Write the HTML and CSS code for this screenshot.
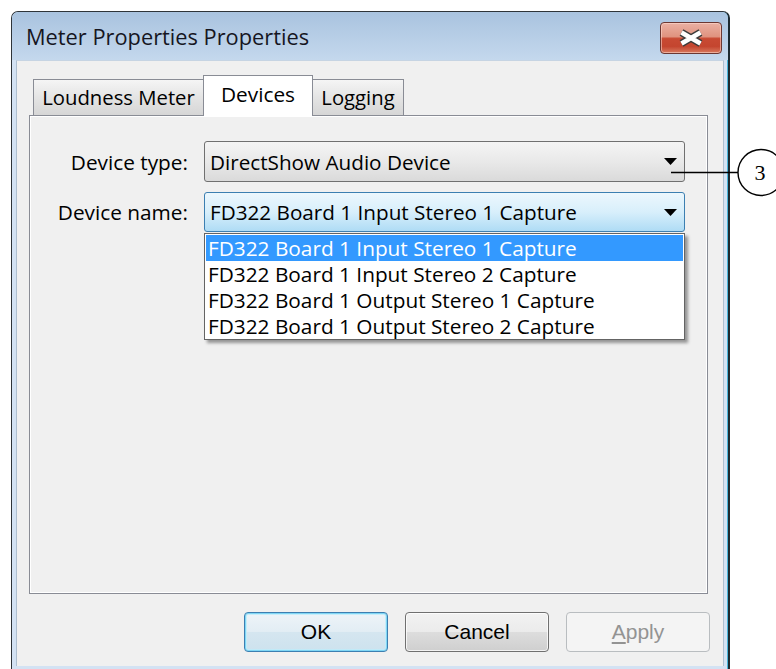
FILE: index.html
```html
<!DOCTYPE html>
<html lang="en">
<head>
<meta charset="utf-8">
<title>Meter Properties Properties</title>
<link rel="stylesheet" href="styles.css">
</head>
<body>
<div class="window">
  <div class="titlebar">
    <span class="title">Meter Properties Properties</span>
    <div class="close" aria-label="Close">
      <svg width="62" height="32" viewBox="0 0 62 32">
        <path d="M21.5 10.5 L40.5 21.5 M40.5 10.5 L21.5 21.5" stroke="#3b3b3b" stroke-width="7.4" fill="none"/>
        <path d="M21.5 10.5 L40.5 21.5 M40.5 10.5 L21.5 21.5" stroke="#ffffff" stroke-width="4.6" fill="none"/>
      </svg>
    </div>
  </div>
  <div class="client">
    <div class="tabs">
      <div class="tab">Loudness Meter</div>
      <div class="tab active">Devices</div>
      <div class="tab last">Logging</div>
    </div>
    <div class="page">
      <div class="form">
        <span class="label">Device type:</span>
        <div class="combo">
          <span class="value">DirectShow Audio Device</span>
          <svg class="arrow" width="13" height="7" viewBox="0 0 13 7"><polygon points="0,0 13,0 6.5,7" fill="#000"/></svg>
        </div>
        <span class="label">Device name:</span>
        <div class="combo-wrap">
          <div class="combo focused">
            <span class="value">FD322 Board 1 Input Stereo 1 Capture</span>
            <svg class="arrow" width="13" height="7" viewBox="0 0 13 7"><polygon points="0,0 13,0 6.5,7" fill="#000"/></svg>
          </div>
          <ul class="dropdown">
            <li class="selected">FD322 Board 1 Input Stereo 1 Capture</li>
            <li>FD322 Board 1 Input Stereo 2 Capture</li>
            <li>FD322 Board 1 Output Stereo 1 Capture</li>
            <li>FD322 Board 1 Output Stereo 2 Capture</li>
          </ul>
        </div>
      </div>
    </div>
    <div class="buttons">
      <button class="btn default">OK</button>
      <button class="btn">Cancel</button>
      <button class="btn disabled"><u>A</u>pply</button>
    </div>
  </div>
</div>
<svg class="callout" width="120" height="56" viewBox="0 0 120 56">
  <line x1="1" y1="27.5" x2="68" y2="27.5" stroke="#000" stroke-width="1.4"/>
  <circle cx="91" cy="27.5" r="23" fill="#fff" stroke="#000" stroke-width="1.4"/>
  <text x="90" y="35" text-anchor="middle" class="callout-num">3</text>
</svg>
</body>
</html>
```

FILE: styles.css
```css
html, body {
  margin: 0;
  padding: 0;
}

body {
  position: relative;
  width: 776px;
  height: 669px;
  overflow: hidden;
  background: #ffffff;
  font-family: "Open Sans", "Noto Sans", sans-serif;
  color: #000;
}

/* dialog frame */
.window {
  box-sizing: border-box;
  margin: 11px 0 0 11px;
  width: 719px;
  height: 659px;
  border: 1px solid #2e3439;
  border-right: 2px solid #1c2a31;
  border-bottom: none;
  border-radius: 7px 7px 0 0;
  background: #d3e2f3;
  box-shadow: inset -1px 0 0 #49b6dc;
  padding-bottom: 4px;
  display: flex;
  flex-direction: column;
}

.titlebar {
  flex: none;
  height: 48px;
  display: flex;
  align-items: flex-start;
  padding: 0 6px 0 14px;
  border-radius: 6px 6px 0 0;
  background: linear-gradient(#a9c3df, #c4d8ed);
}

.title {
  margin-top: 11px;
  font-size: 21.8px;
  line-height: 28px;
  color: #16161f;
  white-space: nowrap;
}

.close {
  margin: 10px 0 0 auto;
  width: 62px;
  height: 32px;
  box-sizing: border-box;
  border: 1px solid #6b3732;
  border-radius: 4px;
  background: linear-gradient(#eab0a3 0%, #e0937f 45%, #c84a33 52%, #c4452f 78%, #d87a5f 100%);
  box-shadow: inset 0 0 0 1px rgba(255, 220, 210, 0.55);
  display: flex;
  align-items: center;
  justify-content: center;
}

.close svg {
  display: block;
  margin: -1px;
}

/* client area */
.client {
  flex: 1;
  margin: 0 4px;
  border-left: 1px solid #aebfd0;
  border-right: 1px solid #aebfd0;
  border-top: 1px solid #c6d4e3;
  background: #f0f0f0;
  padding: 14px 15px 0 12px;
  display: flex;
  flex-direction: column;
}

/* tab strip */
.tabs {
  position: relative;
  z-index: 1;
  height: 40px;
  display: flex;
  align-items: flex-end;
  padding-left: 4px;
}

.tab {
  box-sizing: border-box;
  height: 36px;
  width: 171px;
  border: 1px solid #898c95;
  border-bottom: none;
  background: linear-gradient(#f5f5f5, #e4e4e4 50%, #d6d6d6);
  display: flex;
  align-items: center;
  justify-content: center;
  font-size: 20.3px;
  padding-bottom: 1px;
}

.tab.active {
  width: 110px;
  height: 41px;
  margin: 0 0 -1px -1px;
  background: #ffffff;
  padding-bottom: 4px;
  position: relative;
  font-size: 20.8px;
}

.tab.last {
  width: 92px;
  margin-left: -1px;
}

/* tab page */
.page {
  flex: none;
  box-sizing: border-box;
  height: 479px;
  border: 1px solid #898c95;
  box-shadow: inset 0 0 0 1px #ffffff;
  background: #f0f0f0;
  padding: 25px 0 0 0;
}

.form {
  display: grid;
  grid-template-columns: 158px 481px;
  column-gap: 16px;
  row-gap: 10px;
  align-items: center;
}

.label {
  text-align: right;
  font-size: 20.8px;
  white-space: nowrap;
}

.combo {
  box-sizing: border-box;
  height: 41px;
  border: 1px solid #707070;
  border-radius: 3px;
  background: linear-gradient(#f4f4f4, #e9e9e9 50%, #dadada);
  display: flex;
  align-items: center;
  padding: 0 7px 0 5px;
  font-size: 20.7px;
  white-space: nowrap;
}

.combo.focused {
  height: 40px;
  border-color: #3c7fb1;
  background: linear-gradient(#ecf7fd, #d8effb 50%, #afdcf5);
}

.combo .arrow {
  margin-left: auto;
  display: block;
}

.combo-wrap {
  position: relative;
}

/* open drop-down list */
.dropdown {
  position: absolute;
  left: 0;
  top: 100%;
  width: 481px;
  box-sizing: border-box;
  margin: 1px 0 0 0;
  padding: 1px 1px 0 1px;
  list-style: none;
  background: #ffffff;
  border: 1px solid #646464;
  box-shadow: 3px 3px 3px rgba(0, 0, 0, 0.38);
  font-size: 20.8px;
}

.dropdown li {
  height: 26px;
  line-height: 26px;
  padding-left: 2px;
  white-space: nowrap;
}

.dropdown li.selected {
  background: #3399ff;
  color: #ffffff;
}

/* dialog buttons */
.buttons {
  display: flex;
  justify-content: flex-end;
  gap: 17px;
  margin: 18px -2px 0 0;
}

.btn {
  box-sizing: border-box;
  width: 144px;
  height: 40px;
  padding: 0;
  border: 1px solid #707070;
  border-radius: 4px;
  background: linear-gradient(#f2f2f2, #ebebeb 50%, #dddddd 51%, #cfcfcf);
  box-shadow: inset 0 0 0 1px rgba(255, 255, 255, 0.75);
  font-family: "Liberation Sans", Arial, sans-serif;
  font-size: 21px;
  color: #000;
}

.btn.default {
  border-color: #3c7fb1;
  background: linear-gradient(#eef4f8, #e2edf4 50%, #d5e6f0 51%, #cde2ee);
  box-shadow: inset 0 0 0 1px #7fd6f5, inset 0 0 0 2px rgba(190, 236, 250, 0.8);
}

.btn.disabled {
  border-color: #b9bdc0;
  background: #f4f4f4;
  box-shadow: none;
  color: #939393;
}

.btn u {
  text-underline-offset: 3px;
}

/* numbered annotation */
.callout {
  position: absolute;
  left: 670px;
  top: 145px;
  overflow: visible;
}

.callout-num {
  font-family: "Liberation Serif", "DejaVu Serif", serif;
  font-size: 22px;
}
```
